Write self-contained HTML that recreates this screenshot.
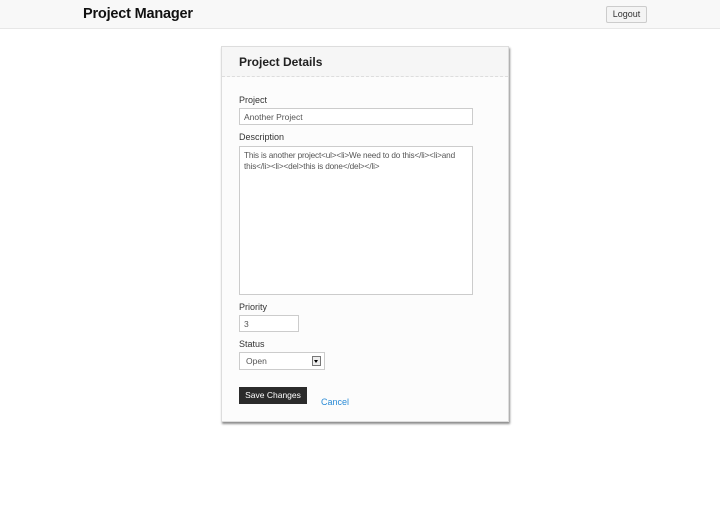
<!DOCTYPE html>
<html><head><style>
*{box-sizing:border-box;margin:0;padding:0}
body{width:720px;height:530px;background:#fff;font-family:"Liberation Sans",Arial,sans-serif;position:relative;overflow:hidden;color:#333}
.nav{position:absolute;left:0;top:0;width:720px;height:29px;background:#f8f8f8;border-bottom:1px solid #e7e7e7}
.brand{position:absolute;left:83px;top:6px;font-size:14.5px;font-weight:bold;color:#111;letter-spacing:-0.2px}
.logout{position:absolute;left:606px;top:6px;width:41px;height:17px;border:1px solid #ccc;background:#f4f4f4;font-size:9px;text-align:center;line-height:15px;color:#333;border-radius:2px}
.card{position:absolute;left:221px;top:46px;width:288px;height:376px;background:#fcfcfc;border:1px solid #ddd;box-shadow:1px 2px 2px rgba(0,0,0,.45)}
.ch{position:absolute;left:0;top:0;width:286px;height:30px;background:#f6f6f6;border-bottom:1px dashed #ddd}
.ch span{position:absolute;left:17px;top:8px;font-size:12px;font-weight:bold;color:#222}
.l{position:absolute;left:239px;font-size:9px;color:#333}
.in{position:absolute;left:239px;background:#fff;border:1px solid #ccc;font-size:8.5px;color:#555;padding:3px 4px}
.btn{position:absolute;left:239px;top:387px;width:68px;height:17px;background:#2b2b2b;color:#fff;font-size:8.5px;text-align:center;line-height:17px}
.cancel{position:absolute;left:321px;top:397px;font-size:9px;color:#2a8bd6}
</style></head><body>
<div class="nav"><div class="brand">Project Manager</div><div class="logout">Logout</div></div>
<div class="card"><div class="ch"><span>Project Details</span></div></div>
<div class="l" style="top:95px">Project</div>
<div class="in" style="top:108px;width:234px;height:17px;line-height:10px">Another Project</div>
<div class="l" style="top:132px">Description</div>
<div class="in" style="top:146px;width:234px;height:149px;line-height:11px;font-size:8.2px;letter-spacing:-0.15px;padding-right:2px">This is another project&lt;ul&gt;&lt;li&gt;We need to do this&lt;/li&gt;&lt;li&gt;and this&lt;/li&gt;&lt;li&gt;&lt;del&gt;this is done&lt;/del&gt;&lt;/li&gt;</div>
<div class="l" style="top:302px">Priority</div>
<div class="in" style="top:315px;width:60px;height:17px;line-height:10px">3</div>
<div class="l" style="top:339px">Status</div>
<div class="in" style="top:352px;width:86px;height:18px;line-height:10px;padding-left:6px">Open
<div style="position:absolute;left:72px;top:3px;width:9px;height:10px;border:1px solid #777;background:#eee"><div style="position:absolute;left:1px;top:3px;width:0;height:0;border-left:2.5px solid transparent;border-right:2.5px solid transparent;border-top:3px solid #000"></div></div></div>
<div class="btn">Save Changes</div>
<div class="cancel">Cancel</div>
</body></html>
